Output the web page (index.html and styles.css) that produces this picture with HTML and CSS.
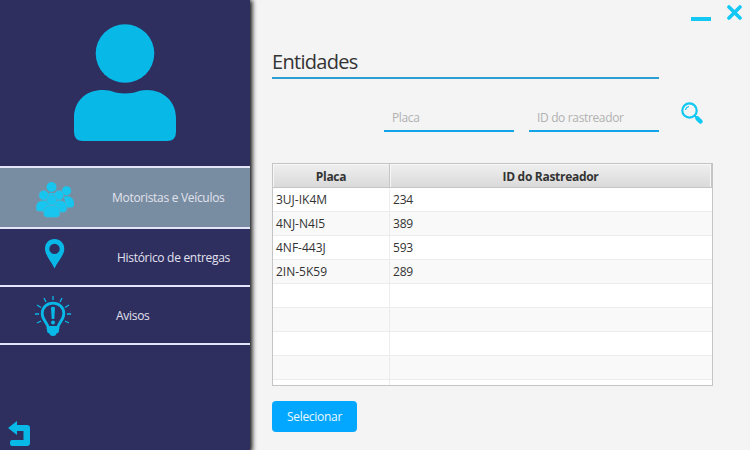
FILE: index.html
```
<!DOCTYPE html>
<html lang="pt-BR">
<head>
<meta charset="utf-8">
<title>Entidades</title>
<link rel="stylesheet" href="styles.css">
</head>
<body>
<div class="app">
  <aside class="sidebar">
    <div class="profile">
      <svg width="102" height="118" viewBox="0 0 102 118"><circle cx="51" cy="29.5" r="29.3"/><path d="M0 94C0 76 13 66 29 66C38 66 40 69.500 51 69.500S64 66 73 66C89 66 102 77 102 94V108Q102 117 93 117H9Q0 117 0 108Z"/></svg>
    </div>
    <nav>
      <a class="item drivers active">
        <svg class="people" width="40" height="36" viewBox="0 0 40 36">
          <g><circle cx="15.500" cy="5" r="5"/><path d="M12 11.500Q15.500 10 19 11.500V14H12Z"/><circle cx="30.500" cy="8.800" r="4.600"/><path d="M28 14.500Q38 13 38 22Q38 25.500 35 25.500H30Z"/></g>
          <g class="edge"><circle cx="7.800" cy="13.300" r="4.800"/><circle cx="23" cy="13.300" r="4.800"/><path d="M0 25Q.5 18.400 8 18.400T15 25V29.300H3Q0 29.300 0 26Z"/><path d="M17 25Q17 18.400 23.500 18.400T31 25Q31 30.300 27 30.300H17Z"/></g>
          <g class="edge"><circle cx="15.700" cy="18" r="5.200"/><path d="M7.500 29.500Q8.500 23.500 15.700 23.500T23.900 29.500V31.500Q23.900 35.300 20 35.300H12Q7.500 35.300 7.500 31.500Z"/></g>
        </svg>
        <span>Motoristas e Veículos</span>
      </a>
      <a class="item history">
        <svg class="pin" width="20" height="30" viewBox="0 0 20 30"><path fill-rule="evenodd" d="M9.500 0C4 0 0 4.200 0 9.700C0 16 6 22 9.500 29.500C13 22 19.300 16 19.300 9.700C19.300 4.200 15 0 9.500 0ZM9.500 4.700a5.200 5.200 0 1 1 0 10.400a5.200 5.200 0 1 1 0-10.400Z"/></svg>
        <span>Histórico de entregas</span>
      </a>
      <a class="item alerts">
        <svg class="bulb" width="36" height="41" viewBox="0 0 36 41">
          <path class="ring" d="M13 31.500C13 27 7.200 24.500 7.200 17.500C7.200 11.500 12 7.200 18 7.200S28.800 11.500 28.800 17.500C28.800 24.500 23 27 23 31.500Z"/>
          <path d="M12 30.500H24V35Q24 37 21.500 37.500Q21 40 18 40T14.500 37.500Q12 37 12 35ZM16 11.500Q18 10 20 11.500L19.300 23H16.700Z"/><circle cx="18" cy="26.500" r="2"/>
          <path class="rays" d="M18 0V4M9 2L11 6M27 2L25 6M2 9L6 11.500M34 9L30 11.500M0 18H4M32 18H36M2 27L6 25M34 27L30 25"/>
        </svg>
        <span>Avisos</span>
      </a>
    </nav>
    <svg class="back" width="22" height="25" viewBox="0 0 22 25"><path d="M0 7L9 0V4H19Q22 4 22 7V22Q22 25 19 25H4Q2 25 2 22.500V22Q2 19 4 19H15.500V10H9V14Z"/></svg>
  </aside>
  <main>
    <div class="window-controls">
      <svg width="20" height="4" viewBox="0 0 20 4"><path d="M0 0H20V4H0Z"/></svg>
      <svg class="close" width="15" height="15" viewBox="0 0 15 15"><path d="M2 2L13 13M13 2L2 13"/></svg>
    </div>
    <h1><span>Entidades</span></h1>
    <div class="filters">
      <div class="field"><span>Placa</span></div>
      <div class="field"><span>ID do rastreador</span></div>
      <svg class="search" width="23" height="23" viewBox="0 0 23 23"><circle cx="8.500" cy="8.500" r="7.200"/><path class="glint" d="M4.500 8Q5 5 8 4.500"/><path class="neck" d="M13.500 13.500L16 16"/><path class="handle" d="M16.500 16.500L19.500 19.500"/></svg>
    </div>
    <div class="table">
      <div class="row head"><div><span>Placa</span></div><div><span>ID do Rastreador</span></div></div>
      <div class="row"><div>3UJ-IK4M</div><div>234</div></div>
      <div class="row"><div>4NJ-N4I5</div><div>389</div></div>
      <div class="row"><div>4NF-443J</div><div>593</div></div>
      <div class="row"><div>2IN-5K59</div><div>289</div></div>
      <div class="row"><div></div><div></div></div>
      <div class="row"><div></div><div></div></div>
      <div class="row"><div></div><div></div></div>
      <div class="row"><div></div><div></div></div>
      <div class="row"><div></div><div></div></div>
    </div>
    <button><span>Selecionar</span></button>
  </main>
</div>
</body>
</html>
```
FILE: styles.css
```
* { box-sizing: border-box; }
body { margin: 0; background: #f4f4f4; color: #333; font: 12px/16px "Open Sans", "Noto Sans", sans-serif; letter-spacing: -0.3px; }
svg { display: block; flex: none; fill: #08b9e8; }
span { white-space: nowrap; }
.app { display: flex; width: 750px; height: 450px; overflow: hidden; }
.sidebar { display: flex; flex-direction: column; flex: none; width: 250px; height: 450px; background: #2e2e5f; box-shadow: 1px 1px 5px 1px #000; }
.profile { height: 166px; padding: 24px 0 0 74px; }
nav { border-top: 2px solid #e4e4fa; }
.item { display: flex; height: 58px; border-bottom: 2px solid #e4e4fa; color: #e2e2ee; }
.item.active { height: 61px; background: #788da1; }
.people { margin: 14px 0 0 36px; fill: #17c5ef; }
.edge { stroke: #5aaac7; stroke-width: .6; }
.drivers span { margin: 22px 0 0 36px; }
.pin { margin: 10px 0 0 45px; }
.history span { margin: 21px 0 0 52px; }
.bulb { margin: 9px 0 0 35px; }
.alerts span { margin: 21px 0 0 45px; }
.ring { fill: none; stroke: #08b9e8; stroke-width: 2.8; }
.rays { fill: none; stroke: #08b9e8; stroke-width: 1.3; }
.back { margin: auto 0 4px 8px; }
main { flex: 1; padding: 5px 0 0 22px; }
.window-controls { display: flex; justify-content: flex-end; align-items: center; gap: 16px; height: 15px; padding-right: 8px; }
.window-controls svg { fill: #14c8f5; }
.window-controls svg:first-child { margin-top: 12px; }
.window-controls .close { fill: none; stroke: #14c8f5; stroke-width: 3.6; stroke-linecap: round; }
h1 { width: 387px; height: 38px; margin: 21px 0 0; border-bottom: 2px solid #2b9fd4; font-size: 20px; line-height: 28px; font-weight: 400; padding-top: 7px; letter-spacing: -0.7px; }
.filters { display: flex; gap: 15px; height: 53px; padding: 22px 0 0 112px; }
.field { width: 130px; height: 31px; padding: 9px 8px 0; border-bottom: 2px solid #11a4e8; color: #b1b1b1; letter-spacing: -0.35px; }
.search { margin: 1px 0 0 7px; fill: none; stroke: #10c8f4; stroke-width: 2.2; }
.search .glint { stroke-width: 1.2; }
.search .neck { stroke-width: 2; }
.search .handle { stroke-width: 4.5; stroke-linecap: round; }
.table { width: 441px; height: 223px; margin-top: 31px; border: 1px solid #c5c5c5; background: #fff; overflow: hidden; letter-spacing: 0; }
.row { display: grid; grid-template-columns: 117px 1fr; height: 24px; border-bottom: 1px solid #ececec; }
.row > div { padding: 4px 3px 0; border-right: 1px solid #ececec; }
.row > div:last-child { border-right: 0; letter-spacing: -0.2px; }
.row:nth-child(odd) { background: #f9f9f9; }
.row.head { background: linear-gradient(#efefef, #dadada); border-color: #c5c5c5; font-weight: 700; text-align: center; }
.row.head > div { padding-top: 5px; border-right: 1px solid #c5c5c5; box-shadow: inset 1px 1px #f7f7f7; letter-spacing: -0.3px; }
.row.head > div:last-child { box-shadow: inset 1px 1px #f7f7f7, inset -1px 0 #f7f7f7; }
button { display: block; width: 85px; height: 31px; margin: 15px 0 0; padding: 0; border: 0; border-radius: 4px; background: #03a7ff; color: #e9f8ff; font: inherit; letter-spacing: -0.3px; }
```
